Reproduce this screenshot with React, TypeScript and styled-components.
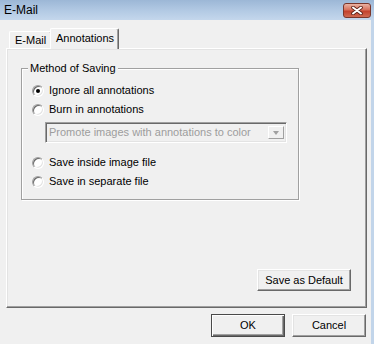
import React from 'react';
import styled, { createGlobalStyle } from 'styled-components';

const Global = createGlobalStyle`
  html, body { margin: 0; padding: 0; background: #f0f0f0; }
  body {
    font-family: "Liberation Sans", Arial, sans-serif;
    font-size: 11px;
    color: #000;
  }
  * { box-sizing: border-box; }
`;

const Window = styled.div`
  width: 374px;
  height: 344px;
  display: flex;
  flex-direction: column;
  background: #f0f0f0;
  overflow: hidden;
`;

const TitleBar = styled.div`
  height: 20px;
  flex: none;
  display: flex;
  align-items: center;
  justify-content: space-between;
  padding: 0 3px 0 4px;
  background: linear-gradient(#9cb7d6, #b3cae4 55%, #c4d7ec);
`;

const Title = styled.span`
  font-size: 12px;
  line-height: 14px;
  color: #000;
`;

const CloseButton = styled.div`
  width: 28px;
  height: 15px;
  border: 1px solid #7a362b;
  border-radius: 3px;
  background: linear-gradient(#eab3a4, #d7705b 45%, #c3412c 55%, #cf6a52);
  display: flex;
  align-items: center;
  justify-content: center;
`;

const Client = styled.div`
  flex: 1;
  display: flex;
  flex-direction: column;
  padding: 8px 4px 0 6px;
  border-right: 3px solid #c2d5ea;
`;

const TabStrip = styled.div`
  display: flex;
  align-items: flex-end;
  height: 20px;
  padding-left: 3px;
  position: relative;
  z-index: 1;
`;

const Tab = styled.div<{ $active?: boolean; $width: number }>`
  position: relative;
  z-index: ${(p) => (p.$active ? 1 : 0)};
  width: ${(p) => p.$width}px;
  height: ${(p) => (p.$active ? 21 : 17)}px;
  margin-bottom: ${(p) => (p.$active ? -1 : 0)}px;
  margin-left: ${(p) => (p.$active ? -2 : 0)}px;
  padding: ${(p) => (p.$active ? '2px 0 0 5px' : '1px 0 0 5px')};
  line-height: 14px;
  background: #f0f0f0;
  border-top: 1px solid #fff;
  border-left: 1px solid #fff;
  border-right: 1px solid #696969;
  border-top-left-radius: 2px;
  border-top-right-radius: 2px;
  box-shadow: inset -1px 0 0 #a0a0a0;
  white-space: nowrap;
`;

const Panel = styled.div`
  height: 260px;
  display: flex;
  flex-direction: column;
  border: 1px solid;
  border-color: #fff #696969 #696969 #fff;
  box-shadow: inset -1px -1px 0 #a0a0a0, inset 1px 1px 0 #e3e3e3;
  padding: 19px 15px 16px 14px;
`;

const GroupBox = styled.div`
  position: relative;
  width: 278px;
  border: 1px solid #a0a0a0;
  box-shadow: inset 1px 1px 0 #fff, 1px 1px 0 #fff;
  padding: 12px 10px 8px 10px;
  display: flex;
  flex-direction: column;
`;

const Legend = styled.span`
  position: absolute;
  top: -7px;
  left: 6px;
  padding: 0 2px;
  line-height: 13px;
  background: #f0f0f0;
`;

const RadioRow = styled.label<{ $gap?: number }>`
  display: flex;
  align-items: center;
  height: 19px;
  gap: 5px;
  margin-top: ${(p) => p.$gap ?? 0}px;
  line-height: 13px;
`;

const RadioCircle = styled.span<{ $checked?: boolean }>`
  width: 12px;
  height: 12px;
  flex: none;
  border-radius: 50%;
  border: 1px solid;
  border-color: #a0a0a0 #fff #fff #a0a0a0;
  box-shadow: inset 1px 1px 0 #696969, inset -1px -1px 0 #e3e3e3;
  background: #fff;
  display: flex;
  align-items: center;
  justify-content: center;
  &::after {
    content: '';
    width: 4px;
    height: 4px;
    border-radius: 50%;
    background: ${(p) => (p.$checked ? '#000' : 'transparent')};
  }
`;

const Select = styled.div`
  margin: 3px 0 0 13px;
  width: 242px;
  height: 21px;
  display: flex;
  align-items: center;
  border: 1px solid;
  border-color: #a0a0a0 #fff #fff #a0a0a0;
  box-shadow: inset 1px 1px 0 #696969, inset -1px -1px 0 #e3e3e3;
  padding: 0 2px 0 3px;
  color: #9d9d9d;
  white-space: nowrap;
  line-height: 13px;
`;

const ArrowButton = styled.span`
  margin-left: auto;
  width: 16px;
  height: 13px;
  flex: none;
  border: 1px solid;
  border-color: #fff #a0a0a0 #a0a0a0 #fff;
  background: #f0f0f0;
  display: flex;
  align-items: center;
  justify-content: center;
  &::after {
    content: '';
    border-left: 3.5px solid transparent;
    border-right: 3.5px solid transparent;
    border-top: 4px solid #a0a0a0;
  }
`;

const Spacer = styled.div`
  flex: 1;
`;

const Button = styled.div<{ $width: number; $default?: boolean }>`
  width: ${(p) => p.$width}px;
  height: ${(p) => (p.$default ? 23 : 22)}px;
  display: flex;
  align-items: center;
  justify-content: center;
  background: #f0f0f0;
  line-height: 13px;
  border: 1px solid;
  border-color: ${(p) => (p.$default ? '#4a4a4a' : '#fff #696969 #696969 #fff')};
  box-shadow: ${(p) =>
    p.$default
      ? 'inset 1px 1px 0 #fff, inset -1px -1px 0 #696969, inset -2px -2px 0 #a0a0a0'
      : 'inset -1px -1px 0 #a0a0a0, inset 1px 1px 0 #e3e3e3'};
`;

const RightButton = styled(Button)`
  align-self: flex-end;
`;

const Footer = styled.div`
  display: flex;
  justify-content: flex-end;
  gap: 7px;
  padding: 6px 1px 0 0;
`;

const FooterButton = styled(Button)`
  height: 23px;
`;

export default function App() {
  return (
    <>
      <Global />
      <Window>
        <TitleBar>
          <Title>E-Mail</Title>
          <CloseButton>
            <svg width="12" height="9" viewBox="0 0 12 9">
              <path d="M2 1.5 L10 7.5 M10 1.5 L2 7.5" stroke="#5b2016" strokeWidth="3.6" strokeLinecap="round" />
              <path d="M2 1.5 L10 7.5 M10 1.5 L2 7.5" stroke="#fff" strokeWidth="2" strokeLinecap="round" />
            </svg>
          </CloseButton>
        </TitleBar>
        <Client>
          <TabStrip>
            <Tab $width={43}>E-Mail</Tab>
            <Tab $width={69} $active>Annotations</Tab>
          </TabStrip>
          <Panel>
            <GroupBox>
              <Legend>Method of Saving</Legend>
              <RadioRow>
                <RadioCircle $checked />
                Ignore all annotations
              </RadioRow>
              <RadioRow>
                <RadioCircle />
                Burn in annotations
              </RadioRow>
              <Select>
                Promote images with annotations to color
                <ArrowButton />
              </Select>
              <RadioRow $gap={10}>
                <RadioCircle />
                Save inside image file
              </RadioRow>
              <RadioRow>
                <RadioCircle />
                Save in separate file
              </RadioRow>
            </GroupBox>
            <Spacer />
            <RightButton $width={94}>Save as Default</RightButton>
          </Panel>
          <Footer>
            <FooterButton $width={74} $default>OK</FooterButton>
            <FooterButton $width={74}>Cancel</FooterButton>
          </Footer>
        </Client>
      </Window>
    </>
  );
}
